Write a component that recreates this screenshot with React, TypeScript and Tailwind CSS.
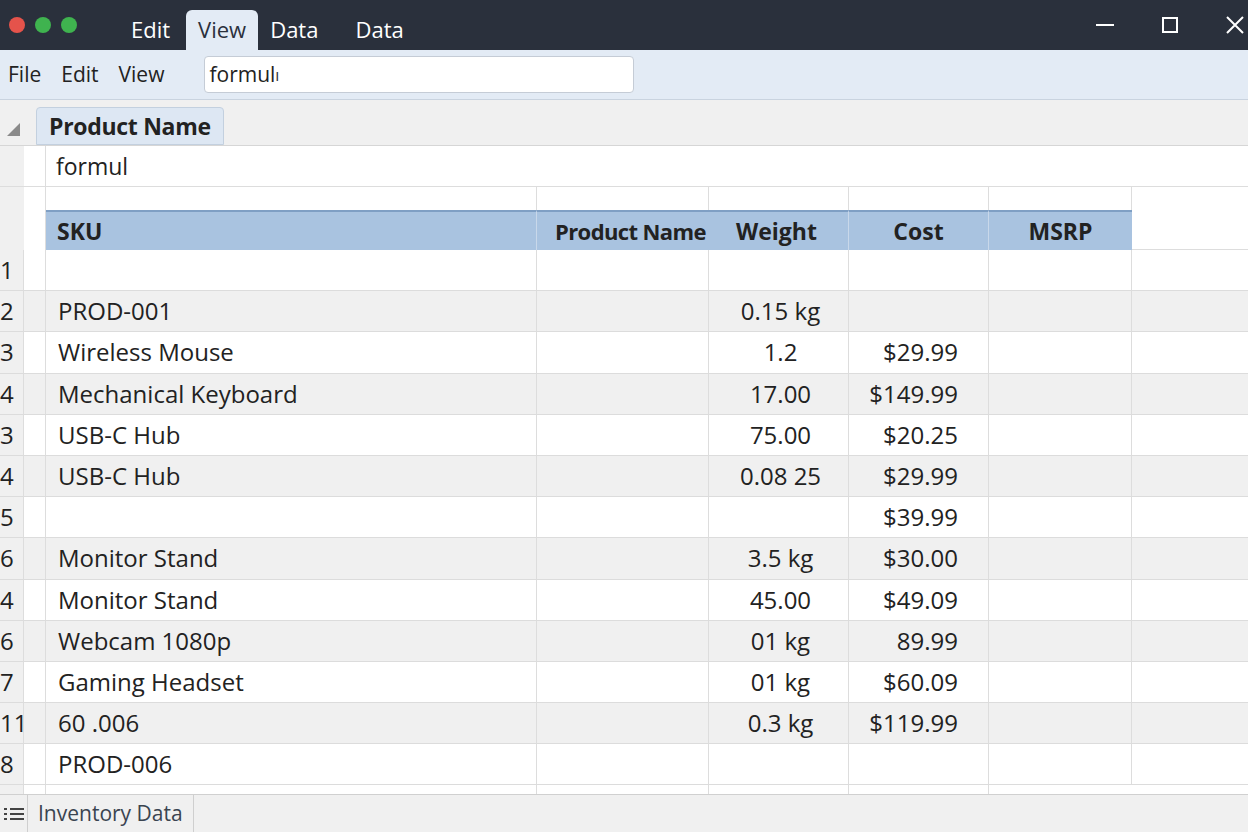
import React from 'react';

const cols = 'grid grid-cols-[24px_22px_491px_172px_140px_140px_143px_1fr]';

const rows: [string, string, string, string][] = [
  ['1', '', '', ''],
  ['2', 'PROD-001', '0.15 kg', ''],
  ['3', 'Wireless Mouse', '1.2', '$29.99'],
  ['4', 'Mechanical Keyboard', '17.00', '$149.99'],
  ['3', 'USB-C Hub', '75.00', '$20.25'],
  ['4', 'USB-C Hub', '0.08 25', '$29.99'],
  ['5', '', '', '$39.99'],
  ['6', 'Monitor Stand', '3.5 kg', '$30.00'],
  ['4', 'Monitor Stand', '45.00', '$49.09'],
  ['6', 'Webcam 1080p', '01 kg', '89.99'],
  ['7', 'Gaming Headset', '01 kg', '$60.09'],
  ['11', '60 .006', '0.3 kg', '$119.99'],
  ['8', 'PROD-006', '', ''],
];

export default function App() {
  return (
    <div className="w-[1248px] h-[832px] overflow-hidden bg-white text-[#222] flex flex-col" style={{ fontFamily: '"Open Sans", "Noto Sans", sans-serif' }}>
      {/* title bar */}
      <div className="h-[50px] bg-[#2a303c] flex items-end shrink-0 relative">
        <div className="flex items-center gap-[10px] pl-[9px] h-full">
          <span className="w-[16px] h-[16px] rounded-full bg-[#e5534b]" />
          <span className="w-[16px] h-[16px] rounded-full bg-[#3fb34f]" />
          <span className="w-[16px] h-[16px] rounded-full bg-[#3fb34f]" />
        </div>
        <div className="flex items-end h-full text-[22px] text-white ml-[38px]">
          <span className="px-[16px] h-[40px] leading-[38px]">Edit</span>
          <span className="px-[12px] h-[40px] leading-[38px] bg-[#e3ebf5] text-[#2a303c] rounded-t-md">View</span>
          <span className="px-[12px] h-[40px] leading-[38px]">Data</span>
          <span className="px-[25px] h-[40px] leading-[38px]">Data</span>
        </div>
        <div className="ml-auto flex items-center h-full gap-[48px] pr-[4px] text-white">
          <span className="w-[18px] h-[2px] bg-white" />
          <span className="w-[16px] h-[16px] border-2 border-white" />
          <svg width="18" height="18" viewBox="0 0 18 18" stroke="white" strokeWidth="2"><path d="M1 1L17 17M17 1L1 17" /></svg>
        </div>
      </div>
      {/* toolbar */}
      <div className="h-[50px] bg-[#e3ebf5] border-b border-[#c9d3df] flex items-center shrink-0 text-[21px]">
        <span className="pl-[8px]">File</span>
        <span className="pl-[20px]">Edit</span>
        <span className="pl-[20px]">View</span>
        <div className="ml-[40px] w-[430px] h-[37px] bg-white border border-[#c5ccd6] rounded-sm flex items-center px-[4px]">formul<span className="text-[#333] text-[16px]">ı</span></div>
      </div>
      {/* tab row */}
      <div className="h-[46px] bg-[#f0f0f0] flex items-end shrink-0 border-b border-[#d6d6d6]">
        <svg width="20" height="20" viewBox="0 0 20 20" className="ml-[4px] mb-[6px]"><path d="M3 17L16 17L16 4Z" fill="#8a8a8a" /></svg>
        <div className="ml-[12px] h-[38px] px-[12px] bg-[#dde7f3] border border-[#c3d0df] rounded-t text-[23px] font-bold leading-[36px] tracking-[-0.3px]">Product Name</div>
      </div>
      {/* formula row */}
      <div className={`${cols} h-[41px] shrink-0 border-b border-[#ddd]`}>
        <div className="bg-[#f0f0f0]" />
        <div className="border-r border-[#ddd] col-span-1" />
        <div className="col-span-6 text-[23px] flex items-center pl-[10px]">formul</div>
      </div>
      <div className={`${cols} h-[23px] shrink-0`}>
        <div className="bg-[#f0f0f0]" />
        <div className="border-r border-[#ddd]" />
        <div className="border-r border-[#ddd]" />
        <div className="border-r border-[#ddd]" />
        <div className="border-r border-[#ddd]" />
        <div className="border-r border-[#ddd]" />
        <div className="border-r border-[#ddd]" />
        <div />
      </div>
      {/* header */}
      <div className={`${cols} h-[40px] shrink-0 text-[23px] font-bold`}>
        <div className="bg-[#f0f0f0]" />
        <div className="border-r border-[#ddd]" />
        <div className="bg-[#a9c3e0] border-t-2 border-[#7f9fc4] border-r border-r-[#c9d8ea] flex items-center pl-[11px]">SKU</div>
        <div className="bg-[#a9c3e0] border-t-2 border-[#7f9fc4] flex items-center pl-[18px] whitespace-nowrap text-[22px] tracking-[-0.6px]">Product Name</div>
        <div className="bg-[#a9c3e0] border-t-2 border-[#7f9fc4] border-r border-r-[#c9d8ea] flex items-center pl-[27px]">Weight</div>
        <div className="bg-[#a9c3e0] border-t-2 border-[#7f9fc4] border-r border-r-[#c9d8ea] flex items-center justify-center">Cost</div>
        <div className="bg-[#a9c3e0] border-t-2 border-[#7f9fc4] flex items-center justify-center">MSRP</div>
        <div className="border-b border-[#ddd]" />
      </div>
      {rows.map((r, i) => (
        <div key={i} className={`${cols} h-[41.2px] shrink-0 border-b border-[#dcdcdc] text-[24px] ${i % 2 ? 'bg-[#f0f0f0]' : 'bg-white'}`}>
          <div className="bg-[#f0f0f0] border-r border-[#ddd] flex items-center">{r[0]}</div>
          <div className="border-r border-[#ddd]" />
          <div className="border-r border-[#ddd] flex items-center pl-[12px]">{r[1]}</div>
          <div className="border-r border-[#ddd]" />
          <div className="border-r border-[#ddd] flex items-center justify-center pl-[4px]">{r[2]}</div>
          <div className="border-r border-[#ddd] flex items-center justify-end pr-[30px]">{r[3]}</div>
          <div className="border-r border-[#ddd]" />
          <div />
        </div>
      ))}
      <div className={`${cols} flex-1`}>
        <div className="bg-[#f0f0f0] border-r border-[#ddd]" />
        <div className="border-r border-[#ddd]" />
        <div className="border-r border-[#ddd]" />
        <div className="border-r border-[#ddd]" />
        <div className="border-r border-[#ddd]" />
        <div className="border-r border-[#ddd]" />
        <div />
        <div />
      </div>
      {/* sheet tabs */}
      <div className="h-[38px] shrink-0 bg-[#f0f0f0] border-t border-[#d0d0d0] flex items-stretch">
        <div className="w-[27px] flex items-center justify-center text-[#444]">
          <svg width="20" height="16" viewBox="0 0 20 16" stroke="#444" strokeWidth="2"><path d="M0 3H3M6 3H20M0 8H3M6 8H20M0 13H3M6 13H20" /></svg>
        </div>
        <div className="px-[10px] border-l border-r border-[#cfcfcf] flex items-center text-[21px] text-[#3a4450]">Inventory Data</div>
      </div>
    </div>
  );
}
